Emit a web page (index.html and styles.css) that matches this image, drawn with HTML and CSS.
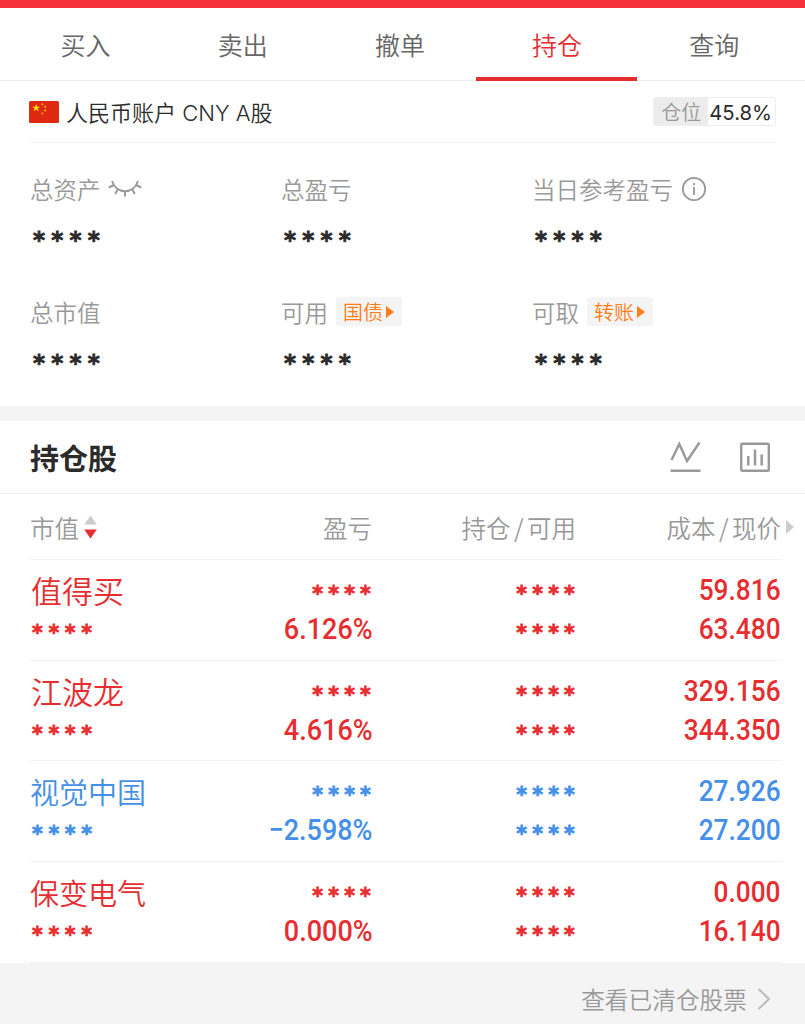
FILE: index.html
```html
<!DOCTYPE html>
<html lang="zh-CN">
<head>
  <meta charset="UTF-8">
  <meta name="viewport" content="width=device-width, initial-scale=1.0">
  <title>持仓</title>
  <link rel="stylesheet" href="styles.css">
</head>
<body>
  <nav class="tabs">
    <a class="tab">买入</a>
    <a class="tab">卖出</a>
    <a class="tab">撤单</a>
    <a class="tab active">持仓</a>
    <a class="tab">查询</a>
  </nav>

  <section class="account">
    <svg class="flag" width="30" height="22" viewBox="0 0 30 22">
      <rect width="30" height="22" rx="1.5" fill="#de2910"/>
      <path fill="#ffde00" d="M7.200 3l1 2.700h2.900l-2.300 1.800.9 2.800L7.200 8.600l-2.500 1.700.9-2.800-2.300-1.800h2.900z"/>
      <g fill="#f5b800">
        <circle cx="13.3" cy="3.2" r="1"/>
        <circle cx="16.1" cy="5.8" r="1"/>
        <circle cx="16.1" cy="9.6" r="1"/>
        <circle cx="13.3" cy="12.6" r="1"/>
      </g>
    </svg>
    <span class="account-name">人民币账户 CNY A股</span>
    <div class="position">
      <span class="position-label">仓位</span>
      <span class="position-value">45.8%</span>
    </div>
  </section>

  <section class="summary">
    <div class="item">
      <div class="label">总资产
        <svg class="eye" width="34" height="20" viewBox="0 0 34 20" fill="none" stroke="#999" stroke-width="2">
          <path d="M4 2C8.500 15.500 25.500 15.500 30 2M.8 8.500L6 6M33.200 8.500L28 6M10 10L7.200 15M17 12v5.500M24 10L26.800 15"/>
        </svg>
      </div>
      <div class="stars">****</div>
    </div>
    <div class="item">
      <div class="label">总盈亏</div>
      <div class="stars">****</div>
    </div>
    <div class="item">
      <div class="label">当日参考盈亏
        <svg class="info" width="26" height="26" viewBox="0 0 26 26" fill="none" stroke="#999" stroke-width="1.8">
          <circle cx="13" cy="13" r="11.200"/>
          <path d="M13 11v8M13 7v2.200"/>
        </svg>
      </div>
      <div class="stars">****</div>
    </div>
    <div class="item">
      <div class="label">总市值</div>
      <div class="stars">****</div>
    </div>
    <div class="item">
      <div class="label">可用 <a class="tag">国债<i class="arrow"></i></a></div>
      <div class="stars">****</div>
    </div>
    <div class="item">
      <div class="label">可取 <a class="tag">转账<i class="arrow"></i></a></div>
      <div class="stars">****</div>
    </div>
  </section>

  <section class="holdings">
    <div class="title-bar">
      <h2>持仓股</h2>
      <svg width="32" height="32" viewBox="0 0 32 32" fill="none" stroke="#999" stroke-width="2.4">
        <path d="M2.500 19L10.300 3L18 20L30.500 1.500M1.500 29.700h30"/>
      </svg>
      <svg width="32" height="32" viewBox="0 0 32 32" fill="none" stroke="#999">
        <rect x="2.200" y="2.700" width="27.600" height="27" rx="1" stroke-width="2.400"/>
        <path stroke-width="2.500" d="M9.300 15v9.500M16 8.500v16M22.700 13.500v11"/>
      </svg>
    </div>

    <div class="row head">
      <div class="col">市值
        <svg class="sort" width="13" height="24" viewBox="0 0 13 24">
          <path fill="#ccc" d="M6.500 .5L12.800 9.500H.2z"/>
          <path fill="#e62e31" d="M6.500 23.500L12.800 14.500H.2z"/>
        </svg>
      </div>
      <div class="col">盈亏</div>
      <div class="col">持仓<b class="slash">/</b>可用</div>
      <div class="col">成本<b class="slash">/</b>现价</div>
      <i class="arrow more"></i>
    </div>

    <div class="row up">
      <div class="col"><span class="name">值得买</span><span class="stars">****</span></div>
      <div class="col"><span class="stars">****</span><span class="num rate">6.126%</span></div>
      <div class="col"><span class="stars">****</span><span class="stars">****</span></div>
      <div class="col"><span class="num">59.816</span><span class="num">63.480</span></div>
    </div>
    <div class="row up">
      <div class="col"><span class="name">江波龙</span><span class="stars">****</span></div>
      <div class="col"><span class="stars">****</span><span class="num rate">4.616%</span></div>
      <div class="col"><span class="stars">****</span><span class="stars">****</span></div>
      <div class="col"><span class="num">329.156</span><span class="num">344.350</span></div>
    </div>
    <div class="row down">
      <div class="col"><span class="name long">视觉中国</span><span class="stars">****</span></div>
      <div class="col"><span class="stars">****</span><span class="num rate">−2.598%</span></div>
      <div class="col"><span class="stars">****</span><span class="stars">****</span></div>
      <div class="col"><span class="num">27.926</span><span class="num">27.200</span></div>
    </div>
    <div class="row up">
      <div class="col"><span class="name long">保变电气</span><span class="stars">****</span></div>
      <div class="col"><span class="stars">****</span><span class="num rate">0.000%</span></div>
      <div class="col"><span class="stars">****</span><span class="stars">****</span></div>
      <div class="col"><span class="num">0.000</span><span class="num">16.140</span></div>
    </div>
  </section>

  <footer class="cleared">
    <span>查看已清仓股票</span>
    <svg width="14" height="24" viewBox="0 0 14 24" fill="none" stroke="#bbb" stroke-width="2">
      <path d="M1.500 2L12 12L1.500 22"/>
    </svg>
  </footer>
</body>
</html>
```

FILE: styles.css
```css
* {
    box-sizing: border-box;
}

body {
    margin: 0;
    height: 1024px;
    overflow: hidden;
    display: flex;
    flex-direction: column;
    background-color: #fff;
    color: #2b2b2b;
    font-family: "Noto Sans CJK SC", sans-serif;
    font-weight: 350;
}

svg {
    flex: none;
}

.tabs {
    display: flex;
    height: 81px;
    padding: 0 10px 0 7px;
    border-top: 8px solid #f6303a;
    border-bottom: 1px solid #f0f0f0;
}

.tab {
    width: 157.2px;
    height: 73px;
    line-height: 73px;
    text-align: center;
    font-size: 25px;
    color: #666;
}

.tab.active {
    width: 161px;
    margin: 0 -1px 0 -3px;
    padding-left: 2px;
    color: #e62e31;
    border-bottom: 4px solid #e62e31;
}

.account {
    display: flex;
    align-items: center;
    height: 62px;
    margin: 0 29px;
    border-bottom: 1px solid #f3f3f3;
}

.account-name {
    margin: -2px 0 0 7px;
    font-family: Inter, "Noto Sans CJK SC", sans-serif;
    font-size: 22px;
}

.position {
    display: flex;
    margin-left: auto;
    height: 29px;
    line-height: 29px;
    border: 1px solid #eee;
    border-radius: 3px;
}

.position-label {
    width: 54px;
    line-height: 28px;
    text-align: center;
    font-size: 20px;
    color: #999;
    background-color: #ececec;
}

.position-value {
    padding: 0 3px 0 1px;
    font-family: Inter, sans-serif;
    font-size: 20.3px;
    font-weight: 400;
}

.summary {
    display: grid;
    grid-template-columns: 251px 251px 1fr;
    grid-auto-rows: 122.5px;
    height: 263px;
    padding: 28px 0 0 30px;
}

.label {
    display: flex;
    align-items: center;
    height: 36px;
    font-size: 23.5px;
    color: #999;
}

.eye {
    margin-left: 7px;
}

.info {
    margin-left: 8px;
}

/* masked amounts */
.stars {
    font-family: "DejaVu Sans", sans-serif;
    font-weight: bold;
    -webkit-text-stroke: 0.8px;
}

.summary .stars {
    height: 58px;
    padding: 13px 0 0 3px;
    font-size: 23px;
    line-height: 40px;
    letter-spacing: 6.2px;
    color: #2b2b2b;
}

.tag {
    display: flex;
    align-items: center;
    height: 29px;
    margin-left: 8px;
    padding: 0 7px 0 7px;
    border-radius: 3px;
    background-color: #f4f4f4;
    font-size: 20px;
    color: #ff7e1a;
}

.arrow {
    margin-left: 3px;
    margin-right: 1px;
    border-left: 8px solid #ff7e1a;
    border-top: 6px solid transparent;
    border-bottom: 6px solid transparent;
}

.holdings {
    border-top: 15px solid #f4f4f4;
}

.title-bar {
    display: flex;
    align-items: center;
    gap: 38px;
    height: 73px;
    padding: 0 34px 0 30px;
    border-bottom: 1px solid #f0f0f0;
}

.title-bar h2 {
    margin: 0 auto 0 0;
    font-size: 29px;
    font-weight: bold;
}

.row {
    display: grid;
    grid-template-columns: 150px 192px 204px 205px;
    height: 100.7px;
    margin: 0 23px 0 29px;
    padding: 10px 0 0 1px;
    border-bottom: 1px solid #f3f3f3;
}

.col {
    display: flex;
    flex-direction: column;
    align-items: flex-end;
}

.col:first-child {
    align-items: flex-start;
}

.up {
    color: #e62e31;
}

.down {
    color: #448fe8;
}

.head {
    position: relative;
    height: 66px;
    padding-top: 1px;
    font-size: 24.5px;
    color: #999;
}

.head .col,
.head .col:first-child {
    flex-direction: row;
    align-items: center;
    justify-content: flex-end;
}

.head .col:first-child {
    justify-content: flex-start;
}

.sort {
    margin-left: 5px;
}

.slash {
    margin: 0 3.5px;
    font-weight: 350;
}

.more {
    position: absolute;
    right: -13px;
    top: 26px;
    border-left-color: #ccc;
    border-top-width: 7px;
    border-bottom-width: 7px;
}

.name {
    height: 39px;
    margin-left: 1px;
    line-height: 40px;
    font-size: 31px;
}

.name.long {
    margin-left: 0;
    font-size: 29px;
}

.row .stars {
    height: 39px;
    padding-top: 4px;
    font-size: 20.5px;
    line-height: 41px;
    letter-spacing: 5.2px;
    margin-right: -4px;
}

.col:first-child .stars {
    margin-left: 2px;
    letter-spacing: 5.7px;
}

.num {
    height: 39px;
    line-height: 39px;
    font-family: Roboto, sans-serif;
    font-size: 30px;
    font-weight: 500;
    transform: scaleX(0.875);
    transform-origin: right;
}

.num.rate {
    margin-right: -1px;
    transform: scaleX(0.9);
}

.cleared {
    flex: 1;
    display: flex;
    align-items: center;
    justify-content: flex-end;
    gap: 10px;
    padding: 11px 34px 0 0;
    background-color: #f4f4f4;
    font-size: 23.7px;
    color: #999;
}
```
